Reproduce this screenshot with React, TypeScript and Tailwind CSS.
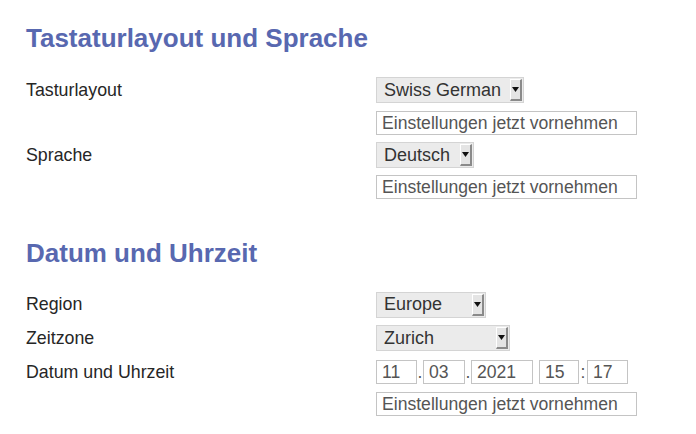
import type { ReactNode } from 'react'

const font = { fontFamily: '"Liberation Sans", Arial, sans-serif' }

function Select({ value, width }: { value: string; width: string }) {
  return (
    <div
      className={`flex h-[26px] items-center justify-between border border-[#d4d4d4] bg-[#ebebeb] pl-[7px] pr-[1px] text-[18px] text-[#333] ${width}`}
    >
      <span>{value}</span>
      <span className="flex h-[22px] w-[12px] items-center justify-center border-t border-l border-t-white border-l-white border-r-2 border-b-2 border-r-[#8a8a8a] border-b-[#8a8a8a] bg-[#e4e4e4]">
        <svg width="7" height="5" viewBox="0 0 7 5">
          <path d="M0 0 H7 L3.5 5 Z" fill="#111" />
        </svg>
      </span>
    </div>
  )
}

function Field({ value, width }: { value: string; width: string }) {
  return (
    <div
      className={`flex h-[24px] items-center border border-[#c4c4c4] bg-white pl-[5px] text-[17.6px] text-[#555] ${width}`}
    >
      {value}
    </div>
  )
}

function Row({ label, children }: { label: string; children: ReactNode }) {
  return (
    <div className="flex items-center">
      <span className="w-[350px] text-[17.8px] text-[#262626]">{label}</span>
      {children}
    </div>
  )
}

function Action() {
  return (
    <div className="pl-[350px]">
      <Field value="Einstellungen jetzt vornehmen" width="w-[261px]" />
    </div>
  )
}

export default function App() {
  return (
    <main className="h-[434px] w-[696px] bg-white px-[26px] pt-[22px]" style={font}>
      <h1 className="text-[26px] leading-[32px] font-bold text-[#5868b0]">
        Tastaturlayout und Sprache
      </h1>
      <div className="mt-[23px] flex flex-col gap-[7px]">
        <Row label="Tasturlayout">
          <Select value="Swiss German" width="w-[148px]" />
        </Row>
        <Action />
        <Row label="Sprache">
          <Select value="Deutsch" width="w-[98px]" />
        </Row>
        <Action />
      </div>

      <h2 className="mt-[38px] text-[26px] leading-[32px] font-bold text-[#5868b0]">
        Datum und Uhrzeit
      </h2>
      <div className="mt-[22px] flex flex-col gap-[7px]">
        <Row label="Region">
          <Select value="Europe" width="w-[110px]" />
        </Row>
        <Row label="Zeitzone">
          <Select value="Zurich" width="w-[134px]" />
        </Row>
        <Row label="Datum und Uhrzeit">
          <div className="flex items-center text-[17.6px] text-[#555]">
            <Field value="11" width="w-[41px]" />
            <span className="w-[6px] text-center">.</span>
            <Field value="03" width="w-[42px]" />
            <span className="w-[6px] text-center">.</span>
            <Field value="2021" width="w-[62px]" />
            <span className="w-[6px]" />
            <Field value="15" width="w-[40px]" />
            <span className="w-[8px] text-center">:</span>
            <Field value="17" width="w-[41px]" />
          </div>
        </Row>
        <Action />
      </div>
    </main>
  )
}
